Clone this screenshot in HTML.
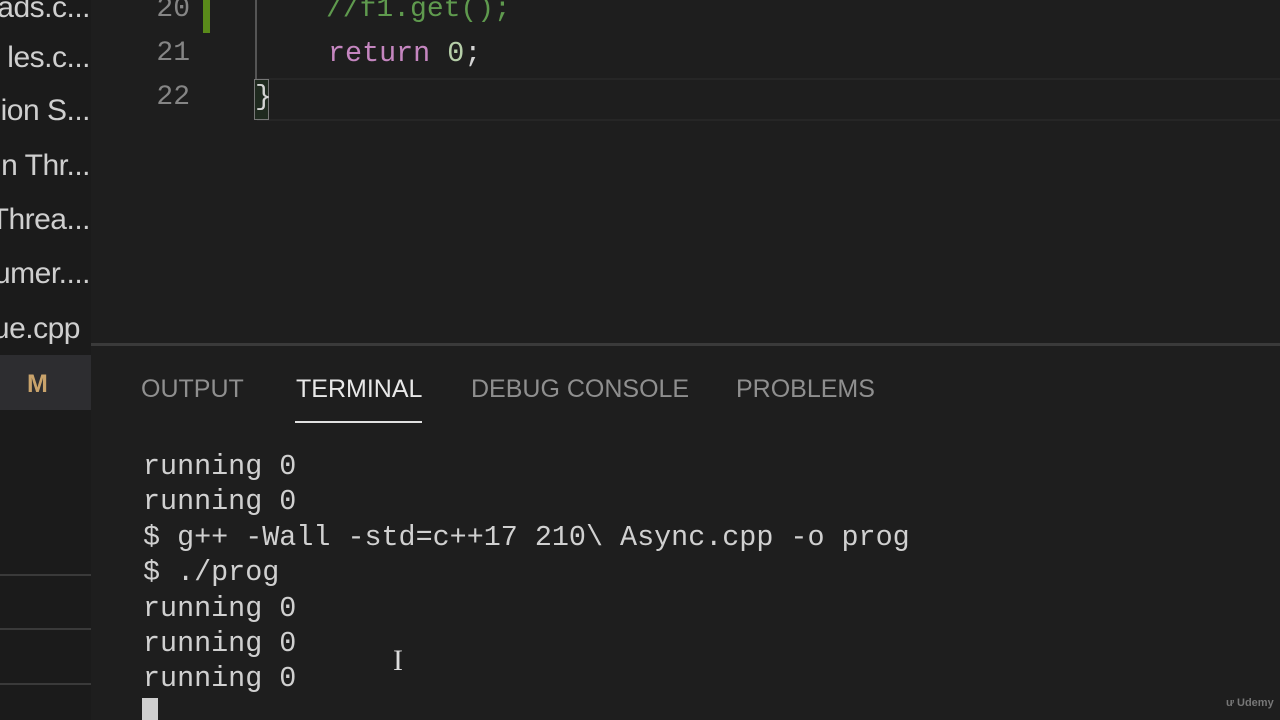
<!DOCTYPE html>
<html><head><style>
body{margin:0;width:1280px;height:720px;background:#1e1e1e;overflow:hidden;position:relative;font-family:"Liberation Sans",sans-serif}
.sb{position:absolute;left:0;top:0;width:91px;height:720px;background:#1b1b1b;overflow:hidden}
.f{position:absolute;right:1px;color:#cfcfcf;font-size:30px;white-space:nowrap;line-height:34px;letter-spacing:-0.5px}
.mono{font-family:"Liberation Mono","DejaVu Sans Mono",monospace;font-size:28px;position:absolute;white-space:pre;line-height:34px}
.ln{color:#858585;right:1090px}
.t{position:absolute;top:372px;font-size:25px;color:#8f8f8f;line-height:34px}
.term{color:#d0d0d0;left:143px;font-size:28.4px;line-height:35.4px}
</style></head><body>
<div class="sb">
<div class="f" style="top:-9px">ads.c...</div>
<div class="f" style="top:41px">les.c...</div>
<div class="f" style="top:94px">ion S...</div>
<div class="f" style="top:149px">n Thr...</div>
<div class="f" style="top:203px">Threa...</div>
<div class="f" style="top:257px">umer....</div>
<div class="f" style="top:312px;right:11px">ue.cpp</div>
<div style="position:absolute;left:0;top:355px;width:91px;height:55px;background:#2d2d30"></div>
<div style="position:absolute;left:27px;top:367px;color:#c9a36b;font-size:25px;font-weight:bold;line-height:34px">M</div>
<div style="position:absolute;left:0;top:574px;width:91px;height:2px;background:#3a3a3a"></div>
<div style="position:absolute;left:0;top:628px;width:91px;height:2px;background:#3a3a3a"></div>
<div style="position:absolute;left:0;top:683px;width:91px;height:2px;background:#3a3a3a"></div>
</div>
<div class="mono ln" style="top:-7px">20</div>
<div class="mono ln" style="top:37px">21</div>
<div class="mono ln" style="top:81px">22</div>
<div style="position:absolute;left:203px;top:0;width:7px;height:33px;background:#5a8a1a"></div>
<div style="position:absolute;left:255px;top:0;width:2px;height:80px;background:#555"></div>
<div style="position:absolute;left:257px;top:78px;width:1023px;height:2px;background:#262626"></div>
<div style="position:absolute;left:257px;top:119px;width:1023px;height:2px;background:#262626"></div>
<div style="position:absolute;left:254px;top:79px;width:15px;height:41px;border:1px solid #777;box-sizing:border-box;background:#1f2a1f"></div>
<div class="mono" style="top:-7px;left:326px;color:#5f9a4e">//f1.get();</div>
<div class="mono" style="top:37px;left:328px;font-size:28.4px"><span style="color:#c586c0">return</span> <span style="color:#b5cea8">0</span><span style="color:#d4d4d4">;</span></div>
<div class="mono" style="top:81px;left:255px;color:#d4d4d4">}</div>
<div style="position:absolute;left:91px;top:343px;width:1189px;height:3px;background:#3a3a3a"></div>
<div class="t" style="left:141px">OUTPUT</div>
<div class="t" style="left:296px;color:#e8e8e8">TERMINAL</div>
<div style="position:absolute;left:295px;top:421px;width:127px;height:2px;background:#e0e0e0"></div>
<div class="t" style="left:471px">DEBUG CONSOLE</div>
<div class="t" style="left:736px">PROBLEMS</div>
<div class="mono term" style="top:449px">running 0
running 0
$ g++ -Wall -std=c++17 210\ Async.cpp -o prog
$ ./prog
running 0
running 0
running 0</div>
<div style="position:absolute;left:142px;top:698px;width:16px;height:22px;background:#cfcfcf"></div>
<div style="position:absolute;left:393px;top:644px;color:#ddd;font-size:30px;font-family:'Liberation Serif',serif">I</div>
<div style="position:absolute;left:1226px;top:697px;color:#777;font-size:11px;font-weight:bold">ư Udemy</div>
</body></html>
